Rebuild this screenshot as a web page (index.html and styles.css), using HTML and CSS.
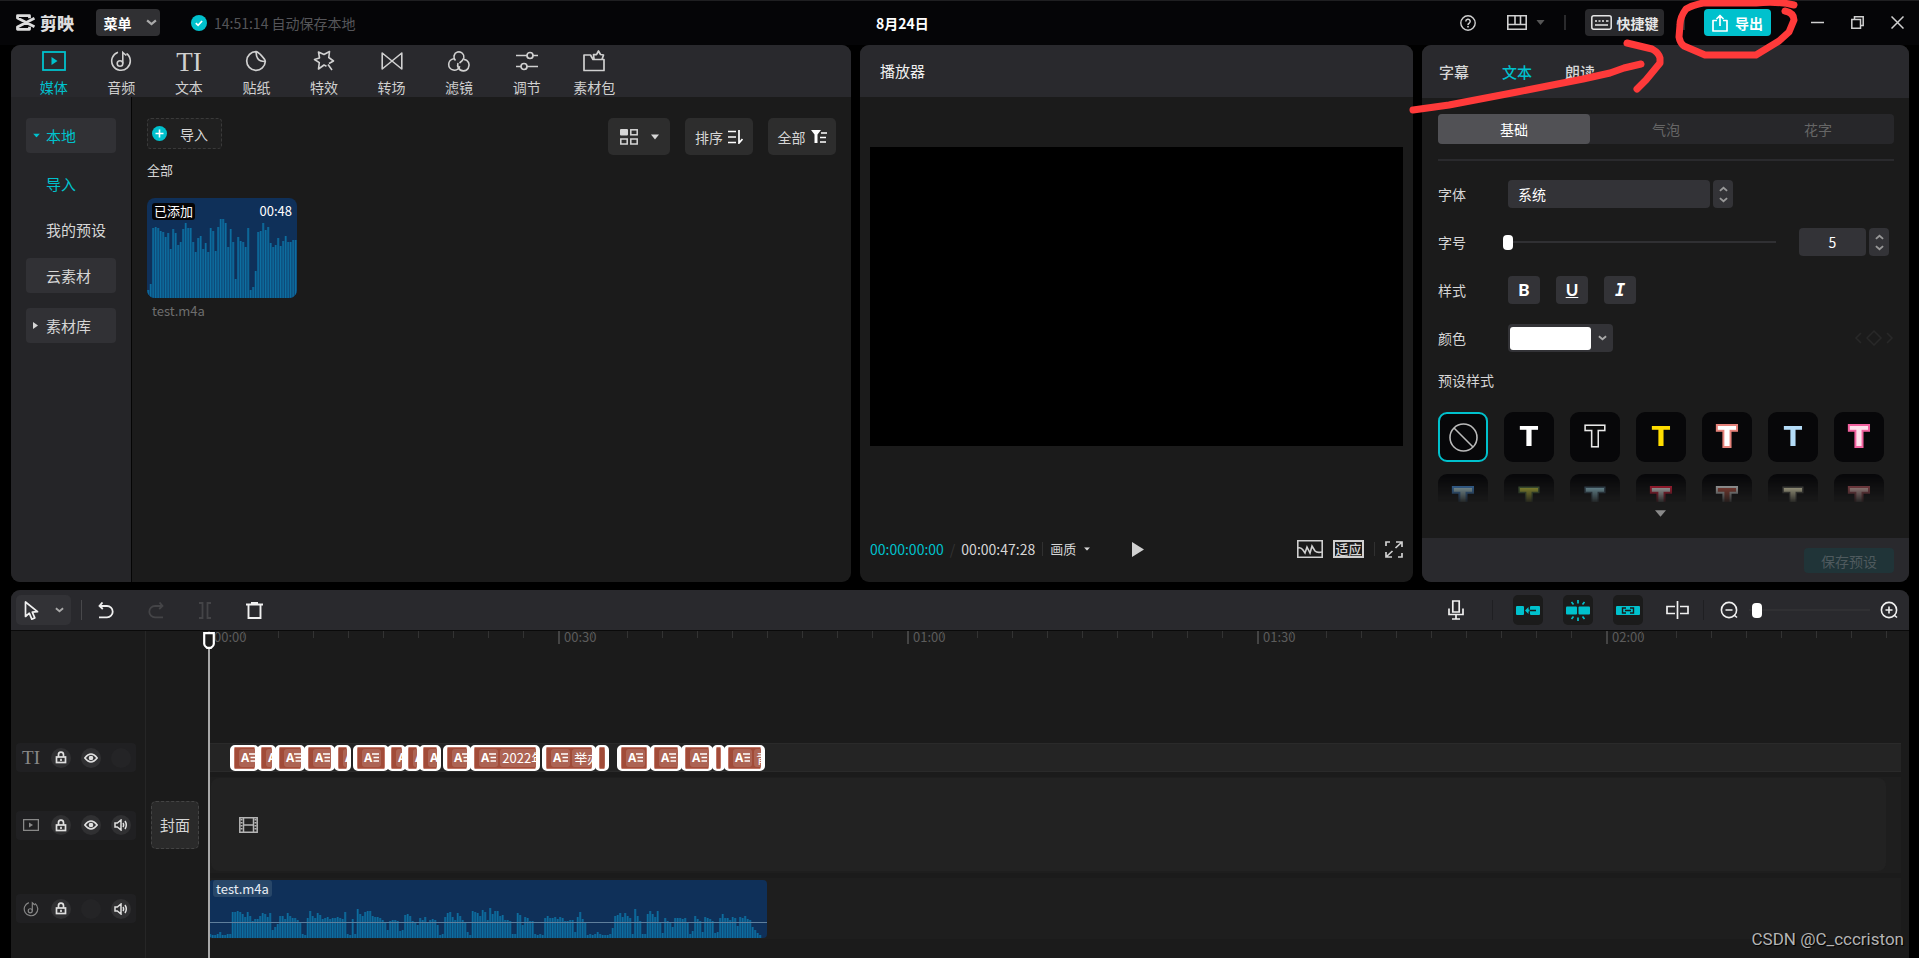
FILE: index.html
```html
<!DOCTYPE html>
<html lang="zh-CN">
<head>
<meta charset="utf-8">
<title>剪映 - 8月24日</title>
<link rel="stylesheet" href="styles.css">
</head>
<body>
<svg class="sprite" aria-hidden="true">
  <symbol id="i-chev" viewBox="0 0 10 6"><path d="M1 1l4 3.4L9 1" fill="none" stroke="currentColor" stroke-width="2"/></symbol>
  <symbol id="i-caret" viewBox="0 0 10 6"><path d="M0 0h10L5 6z" fill="currentColor"/></symbol>
  <symbol id="i-media" viewBox="0 0 24 20"><rect x="1" y="1" width="22" height="18" fill="none" stroke="currentColor" stroke-width="1.8"/><path d="M9.500 6v8l6-4z" fill="currentColor"/></symbol>
  <symbol id="i-audio" viewBox="0 0 22 22"><g fill="none" stroke="currentColor" stroke-width="1.600"><path d="M8 2.200A9.300 9.300 0 1 0 16.500 3.500"/><circle cx="10" cy="13.500" r="2.800"/><path d="M12.800 13.500V2.500l3.500 3"/></g></symbol>
  <symbol id="i-sticker" viewBox="0 0 22 22"><g fill="none" stroke="currentColor" stroke-width="1.700" stroke-linejoin="round"><path d="M11 1.700A9.300 9.300 0 1 0 20.300 11.500C20 8.500 13.500 2 11 1.700z"/><path d="M11 1.700c.3 5 1.200 10 9.300 9.800"/></g></symbol>
  <symbol id="i-effect" viewBox="0 0 22 22"><path d="M13.500 16.200L11 15l-5.500 4 .8-6.300L1.500 9.500l5-1.500L5.500 2 11 4.500 16.500 1.500l-.7 6 4.700 3.500-4.500 2.500M15 14.500l4 5.500" fill="none" stroke="currentColor" stroke-width="1.600" stroke-linejoin="round"/></symbol>
  <symbol id="i-trans" viewBox="0 0 22 20"><path d="M1.200 2v16L11 10zM20.800 2v16L11 10z" fill="none" stroke="currentColor" stroke-width="1.600" stroke-linejoin="round"/></symbol>
  <symbol id="i-filter" viewBox="0 0 24 22"><g fill="none" stroke="currentColor" stroke-width="1.600"><path d="M8.500 10.500a5 5 0 1 1 8.300-2.500q-.8 2.500-4.300 5"/><path d="M6.800 8.800a5.700 5.700 0 1 0 6 7.500"/><path d="M17 9.500a5.700 5.700 0 1 1-5.500 8.500q-1.500-2.500-.5-5"/></g></symbol>
  <symbol id="i-adjust" viewBox="0 0 22 20"><g fill="none" stroke="currentColor" stroke-width="1.700"><path d="M0 4.500h11m6 0h5M0 15.500h5m6 0h11"/><circle cx="14" cy="4.500" r="3"/><circle cx="8" cy="15.500" r="3"/></g></symbol>
  <symbol id="i-pack" viewBox="0 0 22 22"><g fill="none" stroke="currentColor" stroke-width="1.700" stroke-linejoin="round"><path d="M10 9.500L7.500 5H1v15.500h20V9.500z"/><path d="M11 9l-.5-4.500 3 .2L15.500 1l2 3.500 3 .5-1.500 4.500"/></g></symbol>
  <symbol id="i-lock" viewBox="0 0 12 12"><g fill="none" stroke="currentColor" stroke-width="1.700"><rect x="1.500" y="5.500" width="9" height="5.500"/><path d="M3.500 5.500V3.300a2.500 2.500 0 0 1 5-.3V5.500M6 7.200v2.300"/></g></symbol>
  <symbol id="i-eye" viewBox="0 0 14 10"><path d="M.8 5Q7-2.800 13.200 5 7 12.800.8 5z" fill="none" stroke="currentColor" stroke-width="1.500"/><circle cx="7" cy="5" r="2.300" fill="currentColor"/></symbol>
  <symbol id="i-sound" viewBox="0 0 14 12"><g fill="none" stroke="currentColor" stroke-width="1.500"><path d="M1 4v4h2.300L7 11V1L3.300 4z"/><path d="M9 4q1.300 2 0 4m2-6q2.600 4 0 8"/></g></symbol>
  <symbol id="i-stepper" viewBox="0 0 10 18"><g fill="none" stroke="currentColor" stroke-width="2"><path d="M1 5l4-3.500L9 5M1 13l4 3.500L9 13"/></g></symbol>
</svg>

<header class="topbar">
  <div class="topbar-left">
    <div class="brand">
      <svg class="brand-mark" viewBox="0 0 20 17" width="20" height="17"><g fill="none" stroke="currentColor" stroke-width="2.800" stroke-linejoin="round"><path d="M19.500 4.200L2.500 13v2.300h12v-2.500M19.500 12.800L2.500 4V1.700h12v2.500"/></g></svg>
      <span>剪映</span>
    </div>
    <button class="menu-btn" type="button">菜单<svg width="11" height="7"><use href="#i-chev"/></svg></button>
    <div class="saved">
      <svg width="16" height="16" viewBox="0 0 16 16"><circle cx="8" cy="8" r="8" fill="#00c1cd"/><path d="M4.800 8.200l2.300 2.200 4-4.400" fill="none" stroke="#fff" stroke-width="1.700"/></svg>
      <span>14:51:14 自动保存本地</span>
    </div>
  </div>
  <h1 class="project">8月24日</h1>
  <div class="topbar-right">
    <button class="plain" type="button" aria-label="帮助"><svg width="16" height="16" viewBox="0 0 16 16"><circle cx="8" cy="8" r="7.200" fill="none" stroke="currentColor" stroke-width="1.400"/><path d="M5.800 6.500a2.200 2.200 0 1 1 3.300 1.800Q8 8.800 8 10" fill="none" stroke="currentColor" stroke-width="1.500"/><rect x="7.200" y="10.900" width="1.600" height="1.600" fill="currentColor"/></svg></button>
    <button class="plain layout-btn" type="button" aria-label="布局"><svg width="20" height="15" viewBox="0 0 20 15"><path d="M.8.800h18.400v13.400H.8zM.8 9.500h18.400M8 1v8.500M13.500 1v8.500" fill="none" stroke="currentColor" stroke-width="1.600"/></svg><svg class="dim" width="9" height="5" viewBox="0 0 10 6"><use href="#i-caret"/></svg></button>
    <span class="bar-sep"></span>
    <button class="keys-btn" type="button"><svg width="21" height="15" viewBox="0 0 21 15"><rect x=".8" y=".8" width="19.400" height="13.400" rx="2" fill="none" stroke="currentColor" stroke-width="1.500"/><path d="M4 6h2m1.500 0h2m1.500 0h2m2 0h2.500M4 10h13" fill="none" stroke="currentColor" stroke-width="1.500"/></svg>快捷键</button>
    <span class="bar-sep"></span>
    <button class="export-btn" type="button"><svg width="16" height="18" viewBox="0 0 16 18"><path d="M5 6.500H1V17h14V6.500h-4M8 12V1.500M4.500 5L8 1.500 11.500 5" fill="none" stroke="currentColor" stroke-width="1.700" stroke-linejoin="round"/></svg>导出</button>
    <div class="window-btns">
      <button class="plain" type="button" aria-label="最小化"><svg width="13" height="13" viewBox="0 0 13 13"><path d="M0 6.500h13" stroke="currentColor" stroke-width="1.500"/></svg></button>
      <button class="plain" type="button" aria-label="还原"><svg width="13" height="13" viewBox="0 0 13 13"><path d="M.8 3.500h8.700v8.700H.8zM3.500 3.500V.8h8.700v8.700H9.500" fill="none" stroke="currentColor" stroke-width="1.500"/></svg></button>
      <button class="plain" type="button" aria-label="关闭"><svg width="13" height="13" viewBox="0 0 13 13"><path d="M.5.500l12 12m0-12l-12 12" stroke="currentColor" stroke-width="1.500"/></svg></button>
    </div>
  </div>
</header>

<main class="workspace">
  <section class="panel media">
    <nav class="tabs">
      <button class="tab on" type="button"><svg width="24" height="20"><use href="#i-media"/></svg>媒体</button>
      <button class="tab" type="button"><svg width="22" height="22"><use href="#i-audio"/></svg>音频</button>
      <button class="tab" type="button"><span class="ti">TI</span>文本</button>
      <button class="tab" type="button"><svg width="22" height="22"><use href="#i-sticker"/></svg>贴纸</button>
      <button class="tab" type="button"><svg width="22" height="22"><use href="#i-effect"/></svg>特效</button>
      <button class="tab" type="button"><svg width="22" height="20"><use href="#i-trans"/></svg>转场</button>
      <button class="tab" type="button"><svg width="24" height="22"><use href="#i-filter"/></svg>滤镜</button>
      <button class="tab" type="button"><svg width="22" height="20"><use href="#i-adjust"/></svg>调节</button>
      <button class="tab" type="button"><svg width="22" height="22"><use href="#i-pack"/></svg>素材包</button>
    </nav>
    <div class="media-body">
      <aside class="side">
        <button class="side-item boxed on" type="button"><svg class="mark" width="7" height="5" viewBox="0 0 10 6"><use href="#i-caret"/></svg>本地</button>
        <button class="side-item on" type="button">导入</button>
        <button class="side-item" type="button">我的预设</button>
        <button class="side-item boxed" type="button">云素材</button>
        <button class="side-item boxed" type="button"><svg class="mark" width="5" height="7" viewBox="0 0 5 7"><path d="M0 0v7l5-3.500z" fill="currentColor"/></svg>素材库</button>
      </aside>
      <div class="library">
        <div class="library-bar">
          <button class="import-btn" type="button"><svg width="15" height="15" viewBox="0 0 15 15"><circle cx="7.500" cy="7.500" r="7.500" fill="#00c1cd"/><path d="M3.500 7.500h8m-4-4v8" stroke="#fff" stroke-width="1.600"/></svg>导入</button>
          <div class="filters">
            <button class="tool grid-tool" type="button" aria-label="视图"><svg width="18" height="16" viewBox="0 0 18 16"><rect width="8" height="6.500" rx="1" fill="currentColor"/><g fill="none" stroke="currentColor" stroke-width="1.500"><rect x="10.800" y=".8" width="6.400" height="5"/><rect x=".8" y="10" width="6.400" height="5"/><rect x="10.800" y="10" width="6.400" height="5"/></g></svg><svg width="8" height="6"><use href="#i-caret"/></svg></button>
            <button class="tool" type="button">排序<svg width="15" height="14" viewBox="0 0 15 14"><path d="M0 1.500h8M0 7h8M0 12.500h8M11 0v13l3.500-4" fill="none" stroke="currentColor" stroke-width="1.700"/></svg></button>
            <button class="tool" type="button">全部<svg width="16" height="13" viewBox="0 0 16 13"><path d="M0 0h10L6.500 4.500V13h-3V4.500z" fill="currentColor"/><path d="M10 3h6M9 7.500h6M9 12h6" stroke="currentColor" stroke-width="1.500"/></svg></button>
          </div>
        </div>
        <h2 class="group">全部</h2>
        <figure class="asset">
          <div class="thumb">
            <svg class="wave" id="thumb-wave" viewBox="0 0 150 100" width="150" height="100"></svg>
            <span class="added">已添加</span><span class="length">00:48</span>
          </div>
          <figcaption>test.m4a</figcaption>
        </figure>
      </div>
    </div>
  </section>

  <section class="panel player">
    <h2 class="panel-head">播放器</h2>
    <div class="stage"><div class="screen"></div></div>
    <div class="controls">
      <span class="now">00:00:00:00</span><span class="slash">/</span><span class="total">00:00:47:28</span>
      <span class="thin-sep"></span>
      <button class="quality" type="button">画质<svg width="6" height="4" viewBox="0 0 10 6"><use href="#i-caret"/></svg></button>
      <button class="plain play" type="button" aria-label="播放"><svg width="12" height="15" viewBox="0 0 12 15"><path d="M0 0v15l12-7.500z" fill="currentColor"/></svg></button>
      <div class="view-btns">
        <button class="plain" type="button" aria-label="示波器"><svg width="26" height="18" viewBox="0 0 26 18"><path d="M.8.800h24.400v16.400H.8z" fill="none" stroke="currentColor" stroke-width="1.600"/><path d="M1 8q3-1 5 2l2 3 2-6 3 6 2-7 3 5q2 2 7 1" fill="none" stroke="currentColor" stroke-width="1.600"/></svg></button>
        <button class="fit" type="button">适应</button>
        <span class="thin-sep"></span>
        <button class="plain" type="button" aria-label="全屏"><svg width="18" height="17" viewBox="0 0 18 17"><path d="M1 5V1h4M11 1h6v5M17 1l-6.500 6M17 12v4h-4M7 16H1v-5M1 16l6.500-6" fill="none" stroke="currentColor" stroke-width="1.700"/></svg></button>
      </div>
    </div>
  </section>

  <section class="panel props">
    <nav class="props-tabs panel-head">
      <button type="button">字幕</button><button class="on" type="button">文本</button><button type="button">朗读</button>
    </nav>
    <form class="form">
      <div class="segment"><button class="on" type="button">基础</button><button type="button">气泡</button><button type="button">花字</button></div>
      <div class="rows">
        <div class="row"><label for="font">字体</label><select id="font" class="box font-select"><option>系统</option></select><button class="box stepper" type="button" aria-label="切换字体"><svg width="9" height="17"><use href="#i-stepper"/></svg></button></div>
        <div class="row"><label for="size">字号</label><input id="size" class="range size-range" type="range" min="1" max="300" value="1"><input class="box size-input" type="text" value="5" aria-label="字号数值"><button class="box stepper" type="button" aria-label="调整字号"><svg width="9" height="17"><use href="#i-stepper"/></svg></button></div>
        <div class="row styles"><span class="label">样式</span><button class="box" type="button"><b>B</b></button><button class="box" type="button"><u>U</u></button><button class="box" type="button"><i>I</i></button></div>
        <div class="row"><span class="label">颜色</span><button class="box color-btn" type="button" aria-label="颜色"><span class="swatch"></span><svg width="9" height="6"><use href="#i-chev"/></svg></button>
          <svg class="keyframes" width="40" height="16" viewBox="0 0 40 16"><path d="M7 3L2 8l5 5M33 3l5 5-5 5M20 1l7 7-7 7-7-7z" fill="none" stroke="currentColor" stroke-width="1.500"/></svg></div>
      </div>
      <h3 class="preset-title">预设样式</h3>
      <div class="presets">
        <button class="preset none" type="button" aria-label="无"><svg width="29" height="29" viewBox="0 0 29 29"><g fill="none" stroke="currentColor" stroke-width="1.600"><circle cx="14.500" cy="14.500" r="13.500"/><path d="M5 5l19 19"/></g></svg></button>
        <button class="preset p-white" type="button">T</button><button class="preset p-line" type="button">T</button><button class="preset p-yellow" type="button">T</button><button class="preset p-coral" type="button">T</button><button class="preset p-sky" type="button">T</button><button class="preset p-pink" type="button">T</button>
        <button class="preset p-blue" type="button">T</button><button class="preset p-olive" type="button">T</button><button class="preset p-teal" type="button">T</button><button class="preset p-red" type="button">T</button><button class="preset p-rust" type="button">T</button><button class="preset p-cream" type="button">T</button><button class="preset p-rose" type="button">T</button>
      </div>
      <button class="plain more" type="button" aria-label="展开"><svg width="11" height="7"><use href="#i-caret"/></svg></button>
    </form>
    <footer class="props-foot"><button type="button" disabled>保存预设</button></footer>
  </section>
</main>

<section class="timeline">
  <div class="tl-bar">
    <button class="select-tool" type="button" aria-label="选择"><svg width="16" height="21" viewBox="0 0 16 21"><path d="M1.500 2v14.500l3.800-3.300 2.500 6 3-1.300-2.500-5.800 5.200-.4z" fill="none" stroke="currentColor" stroke-width="1.700" stroke-linejoin="round"/></svg><svg class="soft" width="9" height="6"><use href="#i-chev"/></svg></button>
    <span class="bar-sep"></span>
    <div class="edit-btns">
      <button class="plain" type="button" aria-label="撤销"><svg width="16" height="17" viewBox="0 0 16 17"><path d="M4.500.500L1.500 4l3.300 3M1.500 4H9a5.700 5.700 0 0 1 0 11.400H1" fill="none" stroke="currentColor" stroke-width="1.800"/></svg></button>
      <button class="plain off" type="button" aria-label="重做"><svg width="16" height="17" viewBox="0 0 16 17"><path d="M11.500.500l3 3.500-3.300 3M14.500 4H7a5.700 5.700 0 0 0 0 11.400h8" fill="none" stroke="currentColor" stroke-width="1.800"/></svg></button>
      <button class="plain off" type="button" aria-label="分割"><svg width="14" height="17" viewBox="0 0 14 17"><path d="M1 1h3.500v15H1M13 1H9.500v15H13" fill="none" stroke="currentColor" stroke-width="1.800"/></svg></button>
      <button class="plain" type="button" aria-label="删除"><svg width="17" height="17" viewBox="0 0 17 17"><path d="M0 2.500h17M5 1h7M2.500 3v13h12V3" fill="none" stroke="currentColor" stroke-width="1.900"/></svg></button>
    </div>
    <div class="tl-right">
      <button class="plain mic" type="button" aria-label="录音"><svg width="16" height="20" viewBox="0 0 16 20"><path d="M4.800 1h6.400v11H4.800zM1 8.500v6h14v-6M8 14.500V19M4 19h8" fill="none" stroke="currentColor" stroke-width="1.700"/></svg></button>
      <span class="bar-sep"></span>
      <button class="toggle" type="button" aria-label="主轨磁吸"><svg width="24" height="9" viewBox="0 0 24 9"><rect width="8" height="9" rx="1" fill="currentColor"/><path d="M12.500 1L9 4.500 12.500 8V5.500h1v-2h-1z" fill="currentColor"/><rect x="14" width="10" height="9" rx="1" fill="currentColor"/><path d="M14 4.500h6" stroke="#1b1b1b" stroke-width="1.500"/></svg></button>
      <button class="toggle" type="button" aria-label="自动吸附"><svg width="24" height="21" viewBox="0 0 24 21"><rect y="6.500" width="11" height="8" rx="1" fill="currentColor"/><rect x="12.500" y="6.500" width="11.500" height="8" rx="1" fill="currentColor"/><path d="M12 0v3.500M12 17.500V21M5.500 2l2 2.500M18.500 2l-2 2.500M5.500 19l2-2.500M18.500 19l-2-2.500" stroke="currentColor" stroke-width="1.700"/></svg></button>
      <button class="toggle" type="button" aria-label="联动"><svg width="24" height="9" viewBox="0 0 24 9"><rect width="24" height="9" rx="1" fill="currentColor"/><path d="M10 2H6.500v5H10M14 2h3.500v5H14M9 4.500h6" fill="none" stroke="#1b1b1b" stroke-width="1.400"/></svg></button>
      <button class="plain axis" type="button" aria-label="预览轴"><svg width="23" height="18" viewBox="0 0 23 18"><path d="M9 5.500H1v7h8M14 5.500h8v7h-8M11.500 0v18" fill="none" stroke="currentColor" stroke-width="1.700"/></svg></button>
      <span class="bar-sep"></span>
      <button class="plain" type="button" aria-label="缩小"><svg width="18" height="18" viewBox="0 0 18 18"><g fill="none" stroke="currentColor" stroke-width="1.600"><circle cx="9" cy="9" r="7.600"/><path d="M5.500 9h7M14 14l3 2.500"/></g></svg></button>
      <input class="range zoom-range" type="range" min="0" max="100" value="3" aria-label="缩放">
      <button class="plain" type="button" aria-label="放大"><svg width="18" height="18" viewBox="0 0 18 18"><g fill="none" stroke="currentColor" stroke-width="1.600"><circle cx="9" cy="9" r="7.600"/><path d="M5.500 9h7M9 5.500v7M14 14l3 2.500"/></g></svg></button>
    </div>
  </div>
  <div class="tl-body">
    <div class="ruler" id="ruler"></div>

    <div class="track-head"><span class="kind ti">TI</span><button type="button" aria-label="锁定"><svg width="12" height="13"><use href="#i-lock"/></svg></button><button type="button" aria-label="显示"><svg width="14" height="10"><use href="#i-eye"/></svg></button><button class="blank" type="button" disabled></button></div>
    <div class="lane text-lane" id="clips"></div>

    <div class="track-head"><span class="kind"><svg width="16" height="12" viewBox="0 0 16 12"><path d="M.6.600h14.800v10.800H.6z" fill="none" stroke="currentColor" stroke-width="1.300"/><path d="M6 3.500v5l4-2.500z" fill="currentColor"/></svg></span><button type="button" aria-label="锁定"><svg width="12" height="13"><use href="#i-lock"/></svg></button><button type="button" aria-label="显示"><svg width="14" height="10"><use href="#i-eye"/></svg></button><button type="button" aria-label="静音"><svg width="14" height="12"><use href="#i-sound"/></svg></button></div>
    <button class="cover" type="button">封面</button>
    <div class="lane video-lane"><div class="video-drop"><svg width="19" height="16" viewBox="0 0 19 16"><path d="M.8.800h17.400v14.400H.8zM4.500 1v14M14.500 1v14M4.500 8h10" fill="none" stroke="currentColor" stroke-width="1.500"/><path d="M2.500 2v12M16.500 2v12" stroke="currentColor" stroke-width="2" stroke-dasharray="1.500 1.500"/></svg></div></div>

    <div class="track-head"><span class="kind"><svg width="16" height="16"><use href="#i-audio"/></svg></span><button type="button" aria-label="锁定"><svg width="12" height="13"><use href="#i-lock"/></svg></button><button class="blank" type="button" disabled></button><button type="button" aria-label="静音"><svg width="14" height="12"><use href="#i-sound"/></svg></button></div>
    <div class="lane audio-lane"><div class="audio-clip"><span>test.m4a</span><svg class="wave" id="clip-wave" viewBox="0 0 558 58" width="558" height="58"></svg></div></div>

    <div class="playhead"><svg width="12" height="17" viewBox="0 0 12 17"><path d="M1.200 1.200h9.600V12q0 2-2.800 3.800H4Q1.200 14 1.200 12z" fill="#1b1b1b" stroke="#fff" stroke-width="2.200"/></svg></div>
  </div>
</section>

<svg class="marks" width="519" height="120" viewBox="1400 0 519 120" aria-hidden="true"><g fill="none" stroke="#ff3a3a" stroke-width="7" stroke-linecap="round" stroke-linejoin="round"><path d="M1794 5q-16-4-38-2h-53q-10 2-17 6-6 8-6 16l-1 12q1 6 5 9l21 9h51l23-14 10-9 5-12q0-7-9-9"/><path d="M1413 110l36-5 68-13 66-13 27-6 14-5 17-4"/><path d="M1627 43l25 6q7 4 8 9v5l-14 17-9 9"/></g></svg>
<p class="credit">CSDN @C_cccriston</p>
<script src="script.js"></script>
</body>
</html>
```

FILE: styles.css
```css
* { box-sizing: border-box; }
html, body { height: 100%; }
body {
  margin: 0;
  display: grid;
  grid-template-rows: 45px minmax(0, 537fr) minmax(0, 376fr);
  background: #000;
  color: #d6d6d6;
  font: 14px/20px "Noto Sans CJK SC", "Noto Sans", sans-serif;
  overflow: hidden;
  position: relative;
}
button, input, select { font: inherit; color: inherit; border: 0; padding: 0; margin: 0; background: none; }
button { display: flex; align-items: center; justify-content: center; }
h1, h2, h3, p, figure { margin: 0; font-size: inherit; font-weight: 400; }
svg { display: block; flex: none; }
.sprite { position: absolute; width: 0; height: 0; }
.plain { color: #d0d0d0; }
.dim { color: #555; }
.soft { color: #aaa; }
.bar-sep { width: 2px; height: 15px; background: #2a2a2c; }
.ti { font-family: "Liberation Serif", serif; }

/* title bar */
.topbar {
  display: grid;
  grid-template-columns: 840fr 553fr 487fr;
  column-gap: 9px;
  align-items: center;
  padding: 0 10px 1px 11px;
  background: #050507;
  border-top: 1px solid #1f1f21;
}
.topbar-left { display: flex; align-items: center; padding-left: 4px; }
.brand { display: flex; align-items: center; gap: 5px; width: 81px; color: #dcdcdc; font-size: 17px; font-weight: 900; }
.menu-btn { width: 64px; height: 27px; gap: 14px; padding-left: 4px; border-radius: 4px; background: #303033; color: #fff; font-weight: 700; }
.menu-btn svg { color: #aaa; }
.saved { display: flex; align-items: center; gap: 7px; margin-left: 31px; color: #555559; }
.project { padding-left: 16px; color: #fff; font-weight: 700; }
.topbar-right { display: flex; align-items: center; justify-content: flex-end; gap: 19px; padding-right: 5px; }
.layout-btn { margin-left: 12px; gap: 9px; }
.keys-btn { width: 79px; height: 27px; gap: 5px; border-radius: 4px; background: #29292c; color: #e6e6e6; font-weight: 700; }
.export-btn { width: 67px; height: 27px; gap: 7px; border-radius: 4px; background: #00c1cd; color: #fff; font-weight: 700; }
.window-btns { display: flex; gap: 27px; margin-left: 21px; }

/* panels */
.workspace {
  display: grid;
  grid-template-columns: 840fr 553fr 487fr;
  column-gap: 9px;
  padding: 0 10px 0 11px;
}
.panel { display: flex; flex-direction: column; min-width: 0; border-radius: 9px; background: #1b1b1b; overflow: hidden; }
.panel-head { height: 52px; padding: 16px 20px; background: #29292d; color: #f0f0f0; font-size: 15px; }

.tabs { display: grid; grid-template-columns: repeat(9, 1fr); height: 52px; padding: 0 223px 0 9px; background: #29292d; }
.tab { flex-direction: column; justify-content: flex-start; color: #d0d0d0; }
.tab svg, .tab .ti { height: 32px; }
.tab .ti { font-size: 27px; line-height: 34px; }
.tab.on { color: #00c1cd; }
.media-body { display: flex; flex: 1; }
.side { width: 121px; padding: 21px 15px; border-right: 1px solid #050505; background: #252528; font-size: 15px; display: flex; flex-direction: column; }
.side-item { position: relative; justify-content: flex-start; height: 35px; padding-left: 20px; border-radius: 4px; margin-bottom: 11px; white-space: nowrap; }
.side-item.boxed { background: #313135; margin-bottom: 15px; }
.side-item.boxed:first-child { margin-bottom: 13px; }
.side-item.on { color: #00c1cd; }
.mark { position: absolute; left: 7px; }
.library { flex: 1; padding: 21px 15px 0 15px; }
.library-bar { display: flex; justify-content: space-between; align-items: flex-start; }
.import-btn { justify-content: flex-start; width: 75px; height: 31px; gap: 13px; padding-left: 4px; border: 1px dashed #3a3a3a; border-radius: 4px; background: #202020; }
.filters { display: flex; gap: 15px; }
.tool { width: 68px; height: 37px; gap: 5px; border-radius: 5px; background: #2d2d2d; }
.grid-tool { width: 62px; gap: 13px; }
.tool svg { color: #fff; }
.grid-tool svg { color: #d6d6d6; }
.group { margin-top: 5px; font-size: 13px; }
.asset { width: 150px; margin-top: 18px; }
.thumb { position: relative; display: flex; justify-content: space-between; height: 100px; padding: 5px; border-radius: 8px; background: #0f3059; overflow: hidden; color: #fff; }
.wave { position: absolute; left: 0; bottom: 0; }
.added { position: relative; height: 17px; padding: 0 2px; border-radius: 3px; background: #050507; font-size: 13px; line-height: 16px; }
.length { position: relative; line-height: 16px; font-size: 13px; }
.asset figcaption { padding: 3px 5px; color: #6e6e6e; font-size: 13px; }

/* player */
.stage { flex: 1; padding: 50px 10px 0; }
.screen { aspect-ratio: 534 / 300; background: #000; }
.controls { display: flex; align-items: center; height: 66px; padding: 0 10px; }
.now { color: #00c1cd; }
.slash { margin: 0 6px; color: #333; }
.thin-sep { width: 1px; height: 14px; margin: 0 7px; background: #303030; }
.quality { gap: 8px; font-size: 13px; }
.play { margin-left: 42px; }
.view-btns { display: flex; align-items: center; gap: 10px; margin-left: auto; }
.view-btns .thin-sep { margin: 0; }
.fit { width: 31px; height: 18px; border: 2px solid #d0d0d0; font-size: 13px; line-height: 14px; font-weight: 500; }

/* properties */
.props-tabs { display: flex; gap: 33px; padding-left: 17px; height: 53px; font-weight: 500; color: #d6d6d6; }
.props-tabs .on { color: #00c1cd; }
.form { display: flex; flex-direction: column; flex: 1; padding: 16px 15px 0 16px; }
.segment { display: grid; grid-template-columns: repeat(3, 1fr); border-radius: 4px; background: #27272a; color: #666; }
.segment button { height: 30px; border-radius: 4px; }
.segment .on { background: #515155; color: #fff; }
.rows { display: flex; flex-direction: column; gap: 20px; margin-top: 15px; padding-top: 19px; border-top: 2px solid #2a2a2d; }
.row { display: flex; align-items: center; height: 28px; padding-right: 5px; }
.row label, .label { width: 70px; }
.box { height: 28px; border-radius: 4px; background: #333337; color: #fff; }
.font-select { width: 202px; padding: 0 10px; appearance: none; }
.stepper { width: 20px; margin-left: 3px; color: #999; }
.range { appearance: none; height: 15px; background: linear-gradient(#303033, #303033) center / 100% 2px no-repeat; }
.range::-webkit-slider-thumb { appearance: none; width: 10px; height: 15px; border-radius: 4px; background: #fff; }
.size-range { flex: 1; margin-left: -5px; margin-right: 23px; }
.size-input { width: 67px; text-align: center; }
.styles .box { width: 32px; margin-right: 16px; font: 700 17px/20px Lato, sans-serif; }
.styles i { font-family: "DejaVu Sans Mono", monospace; }
.color-btn { width: 105px; padding: 2px; justify-content: flex-start; gap: 7px; color: #aaa; }
.swatch { width: 81px; height: 23px; border-radius: 3px; background: #fff; }
.keyframes { margin: 0 -5px 0 auto; color: #282828; }
.preset-title { margin-top: 18px; }
.presets {
  display: grid;
  grid-template-columns: repeat(7, 50px);
  justify-content: space-between;
  row-gap: 12px;
  height: 90px;
  margin: 22px 10px 0 0;
  overflow: hidden;
  mask-image: linear-gradient(#000 62px, transparent 92px);
}
.preset { height: 50px; border-radius: 9px; background: #070709; font: 700 27px/50px "DejaVu Sans", sans-serif; paint-order: stroke fill; }
.preset.none { border: 2px solid #00c1cd; color: #bbb; }
.p-white { color: #fff; }
.p-line { color: #0a0a0a; -webkit-text-stroke: 3px #e8e8e8; }
.p-yellow { color: #ffdd00; }
.p-coral { color: #fff; -webkit-text-stroke: 4px #e5827a; }
.p-sky { color: #b4dcf8; }
.p-pink { color: #ffe0ec; -webkit-text-stroke: 4px #f2619f; }
.p-blue { color: #b5d9e0; -webkit-text-stroke: 4px #3f83cc; }
.p-olive { color: #c8cb3c; -webkit-text-stroke: 3px #4b6a3c; }
.p-teal { color: #98cede; -webkit-text-stroke: 3px #3d5568; }
.p-red { color: #eee; -webkit-text-stroke: 4px #e01a38; }
.p-rust { color: #b64d3d; -webkit-text-stroke: 4px #ddd; }
.p-cream { color: #f3edc4; -webkit-text-stroke: 3px #50504a; }
.p-rose { color: #e0b8b4; -webkit-text-stroke: 4px #a34a52; }
.more { align-self: center; margin: 8px 12px 0 0; color: #8a8a8a; }
.props-foot { display: flex; justify-content: flex-end; height: 44px; padding: 10px 15px; background: #29292d; }
.props-foot button { width: 90px; height: 25px; border-radius: 4px; background: #203438; color: #4f5a5e; }

/* timeline */
.timeline { display: flex; flex-direction: column; margin: 8px 10px 0 11px; border-radius: 9px 9px 0 0; background: #1b1b1b; overflow: hidden; }
.tl-bar { display: flex; align-items: center; height: 41px; flex: none; padding: 0 11px 0 5px; border-bottom: 1px solid #0a0a0a; background: #29292d; }
.tl-bar .plain, .select-tool { color: #f0f0f0; }
.tl-bar .plain.off { color: #444447; }
.tl-bar .bar-sep { height: 20px; width: 1px; background: #48484b; }
.select-tool { width: 55px; height: 30px; gap: 15px; border-radius: 5px; background: #323236; }
.select-tool + .bar-sep { margin: 0 16px 0 10px; }
.edit-btns { display: flex; gap: 34px; }
.tl-right { display: flex; align-items: center; margin-left: auto; }
.tl-right .bar-sep { background: #1f1f22; }
.mic { margin-right: 28px; }
.toggle { width: 30px; height: 30px; margin-left: 20px; border-radius: 5px; background: #1b1b1b; color: #00c1cd; }
.axis { margin: 0 14px 0 23px; }
.axis + .bar-sep { margin-right: 16px; }
.zoom-range { width: 121px; margin: 0 10px 0 11px; }
.tl-body {
  position: relative;
  flex: 1;
  display: grid;
  grid-template-columns: 135px 63px minmax(0, 1fr);
  grid-template-rows: 107px 29px 96px 61px;
  row-gap: 5px;
  align-content: start;
  padding-right: 8px;
  background: linear-gradient(#262626, #262626) 134px 0 / 1px 100% no-repeat;
}
.ruler { grid-column: 3; position: relative; height: 14px; margin: 0 -8px 0 -1px; overflow: hidden; color: #5c5c5c; font-size: 13px; line-height: 12px; }
.tick { position: absolute; top: 0; width: 1px; height: 7px; background: #333; }
.tick.major { width: auto; height: 13px; padding-left: 4px; border-left: 2px solid #444; background: none; }
.lane { grid-column: 3; min-width: 0; }
.track-head { grid-column: 1; align-self: center; display: flex; align-items: center; gap: 10px; width: 120px; height: 29px; margin-left: 5px; padding-left: 5px; border-radius: 4px; background: #202022; color: #e0e0e0; }
.kind { display: flex; justify-content: center; width: 20px; color: #888; font-size: 19px; }
.track-head button { width: 20px; height: 20px; border-radius: 50%; background: #303032; }
.track-head .blank { background: #242426; }
.text-lane { display: flex; align-items: center; border: solid #2a2a2a; border-width: 1px 0; background: #242424; }
.clip { display: flex; align-items: center; flex: none; height: 26px; border: 2px solid #fff; border-left-width: 4px; border-right-width: 4px; border-radius: 5px; background: #a14b38; color: #fff; overflow: hidden; white-space: nowrap; box-shadow: inset 0 0 0 1px #c07565; }
.badge { display: flex; align-items: center; flex: none; height: 18px; margin-left: 5px; padding: 0 2px; border-radius: 3px; background: #ad6454; font: 700 12px/18px "Open Sans", sans-serif; }
.caption { margin-left: 2px; padding: 0 2px; border-radius: 3px; background: #ad6454; font-size: 13px; line-height: 18px; }
.cover { grid-column: 2; align-self: center; width: 48px; height: 48px; margin-left: 5px; border: 1px dashed #444; border-radius: 5px; background: #2a2a2a; font-size: 15px; }
.video-lane { padding: 1px 15px 2px 2px; background: #1e1e1e; }
.video-drop { display: flex; align-items: center; height: 93px; padding-left: 28px; border-radius: 8px; background: #222; color: #b5b5b5; }
.audio-lane { padding: 2px 0 0; background: #1e1e1e; }
.audio-clip { position: relative; width: 558px; height: 58px; border-radius: 4px; background: #0f3059; overflow: hidden; color: #e8eef5; }
.audio-clip span { display: block; width: fit-content; margin-left: 4px; padding: 0 3px; border-radius: 3px; background: #284769; line-height: 17px; font-size: 13px; }
.playhead { position: absolute; left: 192px; top: 1px; bottom: 0; width: 12px; background: linear-gradient(#a8a8a8, #a8a8a8) 5px 0 / 2px 100% no-repeat; }

/* overlays */
.marks { position: absolute; top: 0; right: 0; pointer-events: none; }
.credit { position: absolute; right: 15px; bottom: 9px; color: #b4b4b4; font: 17px/20px Roboto, sans-serif; text-shadow: 1px 1px 1px #000; }
```

FILE: script.js
```js
const PITCH = 2.5;

function drawWave(id, heights) {
  const svg = document.getElementById(id);
  const bottom = svg.viewBox.baseVal.height;
  let body = '', edge = '';
  heights.forEach((h, i) => {
    const x = i * PITCH;
    body += `M${x} ${bottom}v${-h}h${PITCH}v${h}z`;
    edge += `M${x + 0.5} ${bottom}v${-h}h1.3v${h}z`;
  });
  svg.innerHTML = `<path d="${body}" fill="#0e4a78"/><path d="${edge}" fill="#0d6ea0"/>`;
  return svg;
}

drawWave('thumb-wave', [8,14,70,71,70,67,66,61,65,49,69,65,53,56,69,75,70,70,56,46,60,62,49,55,46,70,67,47,71,79,79,75,51,69,56,19,61,57,56,51,70,8,11,27,66,67,75,68,71,55,51,53,60,52,57,62,56,56,58,58]);

const wave = drawWave('clip-wave', [
  4,3,3,4,6,3,3,4,4,26,26,27,26,24,21,26,22,17,19,19,22,25,24,21,25,8,11,14,22,22,19,25,22,20,20,18,16,4,3,
  20,27,22,20,25,23,19,20,21,19,20,20,21,20,19,26,4,3,19,4,29,24,22,26,27,27,22,21,21,20,18,16,8,17,18,18,17,7,8,
  23,24,22,17,15,13,20,18,21,15,18,19,18,13,3,4,21,25,26,21,18,25,22,18,16,6,3,27,26,25,22,28,26,18,30,24,27,27,
  22,23,18,18,17,4,4,25,23,13,21,20,17,17,4,3,4,3,20,22,20,20,21,19,21,20,17,17,18,18,6,21,26,19,15,3,4,3,4,6,4,
  3,3,3,4,10,22,23,25,21,25,22,20,4,29,22,17,4,4,24,27,24,21,27,15,5,20,17,16,11,20,20,20,19,20,16,4,7,22,19,17,
  6,21,20,19,17,5,6,20,24,20,20,18,21,20,12,21,20,22,19,18,11,8,5,3]);
wave.innerHTML += '<path d="M0 42.500h558" stroke="#5f7f9c" stroke-width="1"/>';

const ruler = document.getElementById('ruler');
const labels = ['00:00', '00:30', '01:00', '01:30', '02:00'];
for (let i = 0; i < 49; i++) {
  const tick = document.createElement('span');
  tick.className = i % 10 ? 'tick' : 'tick major';
  tick.style.left = Math.round(i * 34.95) + 'px';
  if (i % 10 === 0) tick.textContent = labels[i / 10];
  ruler.append(tick);
}

/* [start, end, caption] in timeline pixels */
const clips = [
  [21, 50], [48, 67], [66, 96], [95, 126], [125, 142], [144, 180], [178, 197], [195, 212], [210, 232],
  [234, 262], [261, 331, '2022年'], [333, 387, '举办'], [386, 400], [408, 442], [441, 473], [472, 504],
  [503, 516], [515, 556, '青']
];
const lane = document.getElementById('clips');
const lines = '<svg width="7" height="9" viewBox="0 0 7 9"><path d="M0 1h7M1.500 4.500H7M1.500 8H7" stroke="#fff" stroke-width="1.500"/></svg>';
let cursor = 0;
for (const [start, end, caption] of clips) {
  const clip = document.createElement('div');
  clip.className = 'clip';
  clip.style.marginLeft = start - cursor + 'px';
  clip.style.width = end - start + 'px';
  clip.innerHTML = `<span class="badge">A${lines}</span>` + (caption ? `<span class="caption">${caption}</span>` : '');
  lane.append(clip);
  cursor = end;
}
```
